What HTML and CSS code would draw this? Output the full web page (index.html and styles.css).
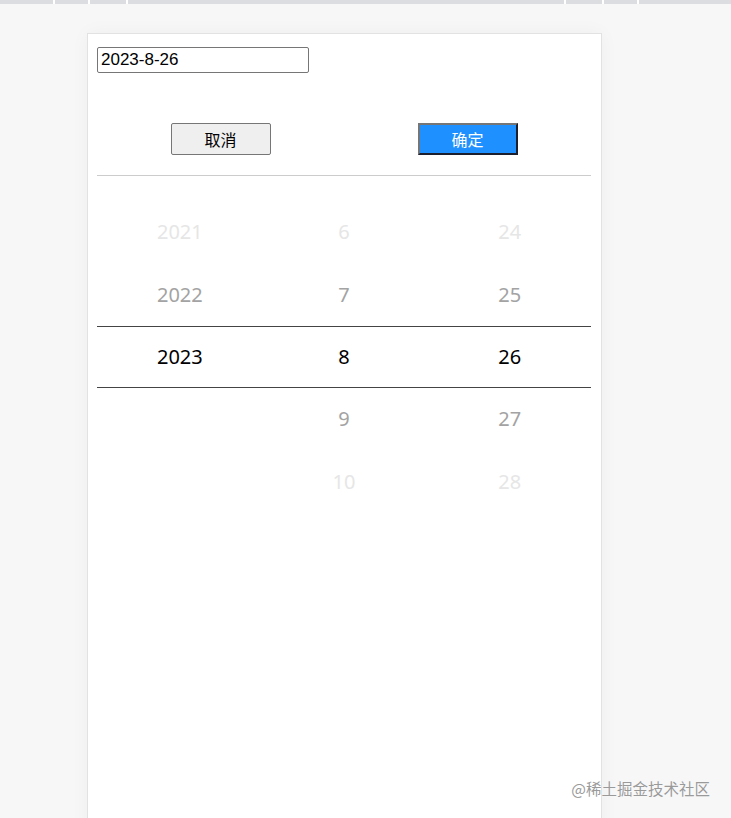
FILE: index.html
```html
<!DOCTYPE html>
<html>
<head>
    <meta charset='utf-8'>
    <title>Date Picker</title>
    <link rel="stylesheet" href="styles.css">
</head>
<body>
    <div class="div-tabs">
        <span class="tab tab-1"></span>
        <span class="tab tab-2"></span>
        <span class="tab tab-3"></span>
        <span class="tab tab-4"></span>
        <span class="tab tab-5"></span>
        <span class="tab tab-6"></span>
        <span class="tab tab-7"></span>
    </div>

    <div class="div-card">
        <input class="input-date" type="text" value="2023-8-26">

        <div class="div-actions">
            <div class="div-cell"><button class="btn-cancel">取消</button></div>
            <div class="div-cell"><button class="btn-ok">确定</button></div>
        </div>

        <div class="div-picker">
            <div class="div-row far"><span>2021</span><span>6</span><span>24</span></div>
            <div class="div-row near"><span>2022</span><span>7</span><span>25</span></div>
            <div class="div-row selected"><span>2023</span><span>8</span><span>26</span></div>
            <div class="div-row near"><span></span><span>9</span><span>27</span></div>
            <div class="div-row far"><span></span><span>10</span><span>28</span></div>
        </div>
    </div>

    <div class="div-mark">@稀土掘金技术社区</div>
</body>
</html>
```

FILE: styles.css
```css
/* reset */
body {
    margin: 0;
    padding: 0;
    height: 818px;
    overflow: hidden;
    background-color: #f7f7f8;
    font-family: "Noto Sans", "Noto Sans CJK SC", sans-serif;
}

/* browser tabs strip */
.div-tabs {
    display: flex;
    gap: 2px;
    height: 4px;
    background-color: #fff;
}
.tab {
    background-color: #dcdde1;
}
.tab-1 { width: 53px; }
.tab-2 { width: 33px; }
.tab-3 { width: 36px; }
.tab-4 { width: 436px; }
.tab-5 { width: 36px; }
.tab-6 { width: 33px; }
.tab-7 { flex-grow: 1; }

/* card */
.div-card {
    margin: 29px 0 0 87px;
    width: 494px;
    min-height: 800px;
    padding: 13px 10px 0 9px;
    background-color: #fff;
    border: 1px solid #e2e2e2;
    box-shadow: 0 0 18px rgba(0, 0, 0, 0.04);
}

.input-date {
    display: block;
    box-sizing: border-box;
    width: 212px;
    height: 26px;
    margin: 0;
    padding: 1px 3px;
    border: 1px solid #767676;
    border-radius: 2px;
    font-family: "Liberation Sans", Arial, sans-serif;
    font-size: 17px;
    color: #000;
}

.div-actions {
    display: flex;
    margin-top: 50px;
    padding-bottom: 20px;
    border-bottom: 1px solid #cccccc;
}
.div-cell {
    flex: 1;
    display: flex;
    justify-content: center;
}
.div-cell button {
    width: 100px;
    height: 32px;
    font-family: "Noto Sans CJK SC", sans-serif;
    font-size: 16px;
    padding: 0;
}
.btn-cancel {
    background-color: #efefef;
    border: 1px solid #767676;
    border-radius: 2px;
    color: #000;
}
.btn-ok {
    background-color: #1e90ff;
    border: 2px solid;
    border-color: #767676 #1b1f2e #1b1f2e #767676;
    color: #fff;
}

/* picker */
.div-picker {
    padding-top: 25px;
}
.div-row {
    display: grid;
    grid-template-columns: 1fr 1fr 1fr;
    height: 62.5px;
    align-items: center;
    text-align: center;
    font-size: 20px;
    line-height: 24px;
}
.div-row span:first-child {
    padding-left: 1px;
}
.div-row span:last-child {
    padding-left: 2px;
}
.far {
    color: #e6e6e6;
}
.near {
    color: #a3a3a3;
}
.selected {
    height: 60px;
    color: #000;
    border-top: 1px solid #444;
    border-bottom: 1px solid #444;
}

/* watermark */
.div-mark {
    position: absolute;
    right: 21px;
    top: 777px;
    font-family: "Noto Sans CJK SC", sans-serif;
    font-size: 15.5px;
    color: #9a9a9a;
    text-shadow: 0 0 1px #fff;
}
```
